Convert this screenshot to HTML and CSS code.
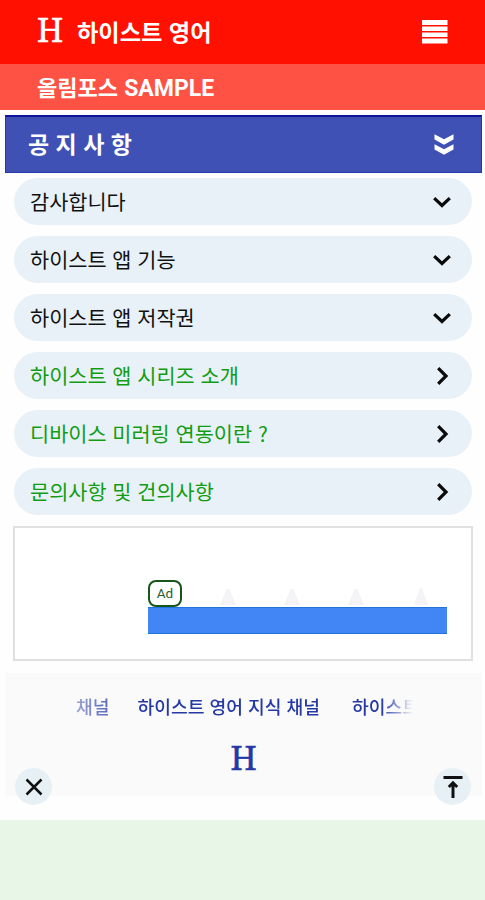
FILE: index.html
```html
<!DOCTYPE html>
<html lang="ko">
<head>
    <meta charset="utf-8" />
    <title>하이스트 영어</title>
    <link rel="stylesheet" href="styles.css">
</head>
<body>

    <div id="header">
        <span class="logo">H</span>
        <h1>하이스트 영어</h1>
        <svg class="menu" width="26" height="26" viewBox="0 0 26 26">
            <path d="M0 1h25.5v4.9H0zM0 7.4h25.5v4.6H0zM0 13.4h25.5v4.6H0zM0 19.5h25.5v4.9H0z" fill="#fff" />
        </svg>
    </div>
    <div id="subheader">올림포스 <b>SAMPLE</b></div>

    <div id="notice">
        <h2>공 지 사 항</h2>
        <svg width="20" height="22" viewBox="0 0 20 22">
            <path d="M.5.2 10 5.2l9.5-5v5.4L10 10.8.5 5.6zM.5 10.2 10 15.2l9.5-5v5.4L10 20.8.5 15.6z" fill="#fff" />
        </svg>
    </div>

    <ul id="list">
        <li><span>감사합니다</span><svg class="arrow" viewBox="0 0 20 20"><path d="M2.2 6.2 10 13.5l7.8-7.3" /></svg></li>
        <li><span>하이스트 앱 기능</span><svg class="arrow" viewBox="0 0 20 20"><path d="M2.2 6.2 10 13.5l7.8-7.3" /></svg></li>
        <li><span>하이스트 앱 저작권</span><svg class="arrow" viewBox="0 0 20 20"><path d="M2.2 6.2 10 13.5l7.8-7.3" /></svg></li>
        <li class="link"><span>하이스트 앱 시리즈 소개</span><svg class="arrow" viewBox="0 0 20 20"><path d="M6.2 2.2 14 10l-7.8 7.8" /></svg></li>
        <li class="link"><span>디바이스 미러링 연동이란 ?</span><svg class="arrow" viewBox="0 0 20 20"><path d="M6.2 2.2 14 10l-7.8 7.8" /></svg></li>
        <li class="link"><span>문의사항 및 건의사항</span><svg class="arrow" viewBox="0 0 20 20"><path d="M6.2 2.2 14 10l-7.8 7.8" /></svg></li>
    </ul>

    <div id="ad">
        <div class="ad-top">
            <span class="badge">Ad</span>
            <svg width="265" height="20" viewBox="0 0 265 20">
                <path d="M38 18 44.5 2h3L54 18zM102 18l6.500-16h3L118 18zM166 18l6.500-16h3L182 18zM232 18l6-17h2l6 17z" fill="#f4f4f6" />
            </svg>
        </div>
        <div class="ad-bar"></div>
    </div>

    <div id="footer">
        <div class="marquee">
            <span>채널</span>
            <span>하이스트 영어 지식 채널</span>
            <span class="next">하이스트</span>
        </div>
        <div class="mark">H</div>
        <div class="round close">
            <svg width="20" height="20" viewBox="0 0 20 20"><path d="M2.5 2.5l15 15M17.5 2.5l-15 15" /></svg>
        </div>
        <div class="round top">
            <svg width="20" height="24" viewBox="0 0 20 24"><path d="M.5 2.5h19M10 23V9M5.8 12 10 7.8l4.2 4.2" /></svg>
        </div>
    </div>

    <div id="bottom"></div>

</body>
</html>
```

FILE: styles.css
```css
body {
    background: #fefefe;
    color: #111;
    font: 20.8px 'Noto Sans CJK KR', sans-serif;
    margin: 0;
    height: 900px;
    display: flex;
    flex-direction: column;
    overflow: hidden;
}

h1, h2 {
    margin: 0;
    font-weight: 500;
}

#header {
    background: #ff1000;
    color: #fff;
    height: 64px;
    padding: 0 37px;
    display: flex;
    align-items: center;
}

    #header h1 {
        font-size: 23.2px;
        font-weight: 700;
        line-height: 62px;
        margin-left: 14px;
        padding-bottom: 2px;
    }

    #header .menu {
        margin-left: auto;
        width: 26px;
    }

.logo {
    font: 33px/60px 'Noto Serif', 'DejaVu Serif', serif;
    -webkit-text-stroke: .5px;
    width: 26px;
    padding-bottom: 4px;
}

#subheader {
    background: #fd5244;
    color: #fff;
    font-size: 22px;
    font-weight: 700;
    line-height: 44px;
    height: 46px;
    padding-left: 37px;
}

    #subheader b {
        font-family: Roboto, sans-serif;
        font-size: 23px;
        font-weight: 700;
    }

#notice {
    background: #3f51b5;
    border: 1px solid #2638a8;
    border-top: 2px solid #0c159c;
    box-sizing: border-box;
    color: #fff;
    height: 58px;
    margin: 5px 3px 0 5px;
    padding: 0 27px 0 22px;
    display: flex;
    align-items: center;
    justify-content: space-between;
}

    #notice h2 {
        font-size: 23px;
        font-weight: 700;
        line-height: 52px;
        padding-bottom: 3px;
    }

#list {
    list-style: none;
    margin: 5px 13px 0 14px;
    padding: 0;
    display: grid;
    gap: 11px;
}

    #list li {
        background: #e7f1f7;
        border-radius: 24px;
        height: 47px;
        line-height: 47px;
        padding: 0 20px 0 16px;
        display: flex;
        align-items: center;
        justify-content: space-between;
    }

    #list .link {
        color: #129c12;
    }

.arrow {
    width: 20px;
    height: 20px;
    fill: none;
    stroke: #0a0a0a;
    stroke-width: 3.2;
}

#ad {
    background: #fff;
    border: 2px solid #e0e0e0;
    box-sizing: border-box;
    height: 135px;
    margin: 11px 12px 0 13px;
    padding: 52px 24px 0 133px;
}

.ad-top {
    display: flex;
    height: 27px;
    align-items: flex-end;
}

.badge {
    border: 2px solid #17551a;
    border-radius: 8px;
    box-sizing: border-box;
    color: #2b5a2d;
    font: 13.5px/23px Roboto, sans-serif;
    text-align: center;
    width: 34px;
    height: 27px;
    flex: none;
}

.ad-bar {
    background: #4285f4;
    border: solid #2172dc;
    border-width: 1px 0;
    box-sizing: border-box;
    height: 27px;
}

#footer {
    background: #fafafa;
    color: #2439a5;
    height: 123px;
    margin: 12px 3px 0 5px;
    position: relative;
}

.marquee {
    display: flex;
    gap: 28px;
    font-size: 18.2px;
    font-weight: 500;
    line-height: 28px;
    margin-left: 71px;
    padding-top: 19px;
    width: 337px;
    overflow: hidden;
    white-space: nowrap;
    -webkit-mask-image: linear-gradient(to right, rgba(0, 0, 0, .45), #000 60px, #000 305px, transparent);
}

    .marquee .next {
        margin-left: 4px;
    }

.mark {
    font: 33px/50px 'Noto Serif', 'DejaVu Serif', serif;
    -webkit-text-stroke: .5px;
    text-align: center;
    padding-top: 13px;
}

.round {
    background: #e7f1f5;
    border-radius: 50%;
    width: 37px;
    height: 37px;
    position: absolute;
    top: 95px;
    display: flex;
    align-items: center;
    justify-content: center;
}

    .round path {
        fill: none;
        stroke: #111;
        stroke-width: 2.5;
    }

    .round.close {
        left: 10px;
    }

    .round.top {
        right: 11px;
    }

        .round.top path {
            stroke-width: 3;
        }

#bottom {
    background: #e8f6e8;
    margin-top: 24px;
    flex: 1;
}
```
